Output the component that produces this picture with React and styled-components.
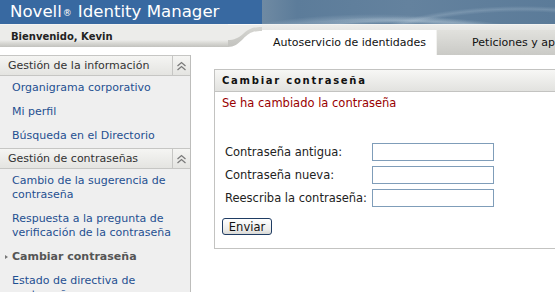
import React from 'react'
import styled, { createGlobalStyle, css } from 'styled-components'

const FONT = `"DejaVu Sans", Verdana, sans-serif`
const LINK = '#1f4f91'
const RULE = '#c6c6c4'

const MENU = [
  {
    title: 'Gestión de la información',
    items: [
      { label: 'Organigrama corporativo' },
      { label: 'Mi perfil' },
      { label: 'Búsqueda en el Directorio' }
    ]
  },
  {
    title: 'Gestión de contraseñas',
    items: [
      { label: 'Cambio de la sugerencia de contraseña' },
      { label: 'Respuesta a la pregunta de verificación de la contraseña' },
      { label: 'Cambiar contraseña', active: true },
      { label: 'Estado de directiva de contraseña' }
    ]
  }
]

const FIELDS = ['Contraseña antigua:', 'Contraseña nueva:', 'Reescriba la contraseña:']

const Swoosh = () => (
  <SwooshSvg width='34' height='23' viewBox='0 0 34 23'>
    <defs>
      <linearGradient id='shade' x1='0' y1='0' x2='0' y2='1'>
        <stop offset='0' stopColor='#d9d9d5' />
        <stop offset='1' stopColor='#c2c2be' />
      </linearGradient>
    </defs>
    <path d='M0 0 H34 V7 C24 7 21 9 15 15 C10 20 6 23 0 23 Z' fill='url(#shade)' />
    <path d='M0 1 H34 V3 C24 3 21 5 15 10 C10 14 6 16 0 16 Z' fill='#ececea' />
    <rect x='0' y='0' width='34' height='1' fill='#fbfbfa' />
  </SwooshSvg>
)

const CollapseIcon = () => (
  <svg width='11' height='10' viewBox='0 0 11 10'>
    <polyline points='1.5,5 5.5,1.5 9.5,5' fill='none' stroke='#7b7b7b' strokeWidth='1.3' />
    <polyline points='1.5,9 5.5,5.5 9.5,9' fill='none' stroke='#7b7b7b' strokeWidth='1.3' />
  </svg>
)

const App = () => {
  return (
    <Page>
      <GlobalStyle />
      <Masthead>
        <Brand>
          Novell<Reg>®</Reg>Identity Manager
        </Brand>
        <Texture />
      </Masthead>

      <NavRow>
        <Welcome>Bienvenido, Kevin</Welcome>
        <Swoosh />
        <Tabs>
          <Tab active>Autoservicio de identidades</Tab>
          <Tab wide>Peticiones y aprobaciones</Tab>
        </Tabs>
      </NavRow>

      <Body>
        <Sidebar>
          {MENU.map(section => (
            <section key={section.title}>
              <SectionHeader>
                <SectionTitle>{section.title}</SectionTitle>
                <Collapse>
                  <CollapseIcon />
                </Collapse>
              </SectionHeader>
              {section.items.map(item => (
                <MenuItem key={item.label} active={item.active}>
                  {item.label}
                </MenuItem>
              ))}
            </section>
          ))}
        </Sidebar>

        <Main>
          <Panel>
            <PanelHeader>Cambiar contraseña</PanelHeader>
            <PanelBody>
              <Message>Se ha cambiado la contraseña</Message>
              <Form>
                {FIELDS.map(label => (
                  <React.Fragment key={label}>
                    <Label>{label}</Label>
                    <Input type='password' />
                  </React.Fragment>
                ))}
              </Form>
              <SubmitButton>Enviar</SubmitButton>
            </PanelBody>
          </Panel>
        </Main>
      </Body>
    </Page>
  )
}

const GlobalStyle = createGlobalStyle`
  html, body {
    margin: 0;
    padding: 0;
    overflow: hidden;
    background: #fff;
  }
  body {
    font-family: ${FONT};
    font-size: 11px;
    color: #222;
  }
`

const Page = styled.div`
  width: 100vw;
  height: 100vh;
  display: flex;
  flex-direction: column;
  overflow: hidden;
`

const Masthead = styled.div`
  display: flex;
  height: 24px;
  flex: 0 0 24px;
  background-color: #3869a1;
`

const Brand = styled.div`
  flex: 0 0 262px;
  box-sizing: border-box;
  padding-left: 10px;
  color: #fff;
  font-size: 16.6px;
  line-height: 24px;
  white-space: nowrap;
`

const Reg = styled.span`
  font-size: 9px;
  margin: 0 6px 0 1px;
  vertical-align: 1px;
`

const Texture = styled.div`
  flex: 1;
  background:
    radial-gradient(ellipse 240px 70px at 140px 78px, transparent 78%, rgba(190, 208, 222, 0.35) 82%, transparent 88%),
    radial-gradient(ellipse 300px 110px at 110px 112px, transparent 80%, rgba(190, 208, 222, 0.3) 84%, transparent 89%),
    radial-gradient(ellipse 200px 60px at 260px 60px, transparent 80%, rgba(190, 208, 222, 0.25) 85%, transparent 90%),
    linear-gradient(90deg, #6f8aa3 0, #5c7c9a 12%, #64829e 50%, #5b7b99 100%);
`

const NavRow = styled.div`
  display: flex;
  flex: 0 0 31px;
  height: 31px;
`

const Welcome = styled.div`
  flex: 0 0 228px;
  box-sizing: border-box;
  height: 23px;
  padding-left: 11px;
  font-size: 10px;
  font-weight: bold;
  line-height: 26px;
  color: #222;
  white-space: nowrap;
  background: linear-gradient(#fbfbfa 0, #ececea 1px, #ececea 16px, #d9d9d5 19px, #c2c2be 23px);
`

const SwooshSvg = styled.svg`
  flex: 0 0 34px;
  display: block;
`

const Tabs = styled.div`
  flex: 1;
  display: flex;
  min-width: 0;
  padding-top: 6px;
  background: linear-gradient(#fbfbfa 0, #ececea 1px, #e6e6e4 6px, #fff 6px);
`

const Tab = styled.div`
  flex: 0 0 auto;
  height: 25px;
  line-height: 25px;
  padding: 0 10px 0 11px;
  white-space: nowrap;
  color: #111;
  ${({ active }) =>
    active
      ? css`
          background-color: #fff;
        `
      : css`
          background: linear-gradient(#e1e1dd, #cacac6);
          border-left: 1px solid #f2f2f0;
        `};
  ${({ wide }) =>
    wide &&
    css`
      padding: 0 36px 0 35px;
    `};
`

const Body = styled.div`
  flex: 1;
  display: flex;
  min-height: 0;
`

const Sidebar = styled.nav`
  flex: 0 0 190px;
  background-color: #efefef;
  border-right: 1px solid #bdbdbb;
`

const SectionHeader = styled.div`
  display: flex;
  height: 19px;
  border-top: 1px solid ${RULE};
  border-bottom: 1px solid ${RULE};
  background: linear-gradient(#f5f5f3, #e4e4e1);
`

const SectionTitle = styled.div`
  flex: 1;
  padding-left: 8px;
  line-height: 19px;
  color: #333;
  white-space: nowrap;
`

const Collapse = styled.div`
  flex: 0 0 17px;
  display: flex;
  align-items: center;
  justify-content: center;
  border-left: 1px solid ${RULE};
`

const MenuItem = styled.div`
  padding: 5px 8px 5px 12px;
  line-height: 14px;
  color: ${LINK};
  cursor: pointer;
  ${({ active }) =>
    active &&
    css`
      color: #555;
      font-weight: bold;
      &::before {
        content: '';
        display: inline-block;
        margin: 0 4px 1px -7px;
        border-left: 3px solid #777;
        border-top: 2.5px solid transparent;
        border-bottom: 2.5px solid transparent;
        vertical-align: middle;
      }
    `};
`

const Main = styled.main`
  flex: 1;
  min-width: 0;
  padding: 14px 0 0 23px;
`

const Panel = styled.div`
  margin-right: -40px;
  border: 1px solid #c3c3c1;
  background-color: #fff;
`

const PanelHeader = styled.div`
  height: 21px;
  padding-left: 7px;
  line-height: 21px;
  font-size: 10px;
  font-weight: bold;
  letter-spacing: 1.75px;
  color: #111;
  border-bottom: 1px solid #c3c3c1;
  background: linear-gradient(#f7f7f5, #e2e2df);
`

const PanelBody = styled.div`
  padding: 4px 8px 13px 7px;
  font-size: 11.5px;
`

const Message = styled.div`
  line-height: 14px;
  color: #990000;
`

const Form = styled.div`
  display: grid;
  grid-template-columns: 147px 122px;
  row-gap: 5px;
  align-items: center;
  margin: 33px 0 0 3px;
`

const Label = styled.label`
  white-space: nowrap;
  color: #222;
`

const Input = styled.input`
  box-sizing: border-box;
  width: 122px;
  height: 18px;
  margin: 0;
  padding: 1px 3px;
  border: 1px solid #7f9db9;
  font: inherit;
  background: #fff;
`

const SubmitButton = styled.button`
  display: block;
  box-sizing: border-box;
  width: 50px;
  height: 17px;
  margin-top: 11px;
  padding: 0;
  font-family: ${FONT};
  font-size: 11.5px;
  line-height: 14px;
  color: #111;
  border: 1px solid #1f3c63;
  border-radius: 3px;
  background: linear-gradient(#ffffff, #ececea 70%, #d9d9d5);
  cursor: pointer;
`

export default App
